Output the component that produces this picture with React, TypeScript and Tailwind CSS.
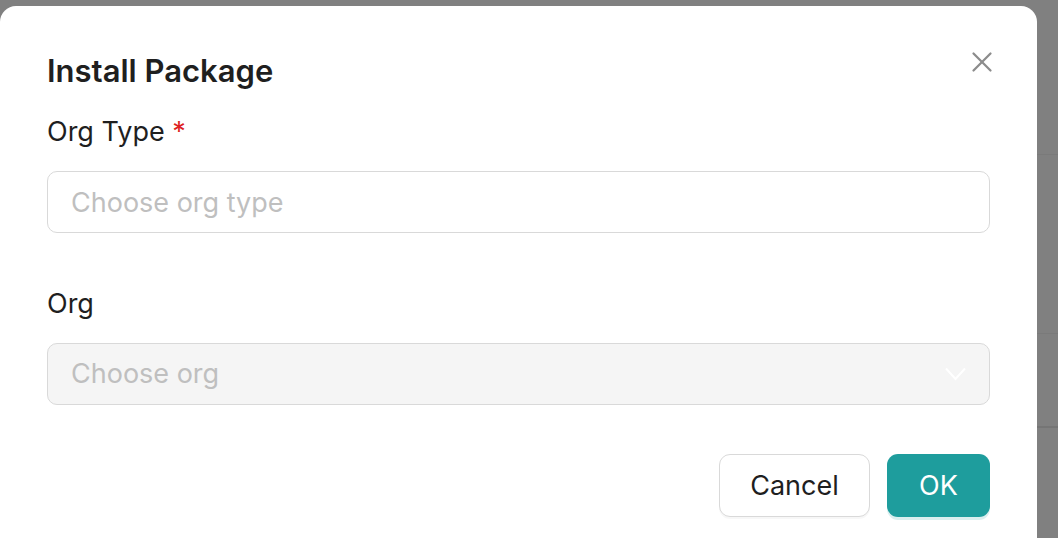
import { X } from "lucide-react";

function Chevron() {
  return (
    <svg width="21" height="14" viewBox="0 0 21 14" fill="none">
      <path d="M1 1.5 L10.5 12 L20 1.5" stroke="#ffffff" strokeWidth="2" />
    </svg>
  );
}

export default function App() {
  return (
    <div className="flex h-[538px] w-[1058px] overflow-hidden bg-[#808080] font-['Inter',sans-serif] text-[#1f1f1f]">
      <div className="w-[1037px] shrink-0 pt-[6px]">
        <div className="h-full rounded-t-[16px] bg-white px-[47px] pt-[45px]">
          <div className="flex items-start justify-between">
            <h2 className="text-[31px] font-semibold leading-[39px]">Install Package</h2>
            <button className="-mr-[9px] -mt-[6px] text-[#8c8c8c]">
              <X size={34} strokeWidth={1.6} />
            </button>
          </div>

          <label className="mt-[24px] block text-[27px] leading-[36px]">
            Org Type <span className="text-[#dd1f1f]">*</span>
          </label>
          <input
            placeholder="Choose org type"
            className="mt-[21px] block h-[62px] w-full rounded-[10px] border border-[#d9d9d9] px-[23px] text-[27px] outline-none placeholder:text-[#bfbfbf]"
          />

          <label className="mt-[53px] block text-[27px] leading-[36px]">Org</label>
          <div className="mt-[21px] flex h-[62px] items-center justify-between rounded-[10px] border border-[#d9d9d9] bg-[#f5f5f5] pl-[23px] pr-[23px]">
            <span className="text-[27px] text-[#bfbfbf]">Choose org</span>
            <Chevron />
          </div>

          <div className="mt-[49px] flex justify-end gap-[17px]">
            <button className="h-[63px] w-[151px] rounded-[11px] border border-[#d9d9d9] bg-white pt-[2px] text-[27px] shadow-[0_2px_0_rgba(0,0,0,0.03)]">
              Cancel
            </button>
            <button className="h-[63px] w-[103px] rounded-[11px] bg-[#1e9d9d] pt-[2px] text-[27px] text-white shadow-[0_3px_0_rgba(5,145,145,0.15)]">
              OK
            </button>
          </div>
        </div>
      </div>
      <div className="flex flex-1 flex-col">
        <div className="h-[155px] border-b border-[#7a7a7a]" />
        <div className="h-[179px] border-b border-[#7a7a7a]" />
        <div className="h-[94px] border-b-2 border-[#757575]" />
      </div>
    </div>
  );
}
